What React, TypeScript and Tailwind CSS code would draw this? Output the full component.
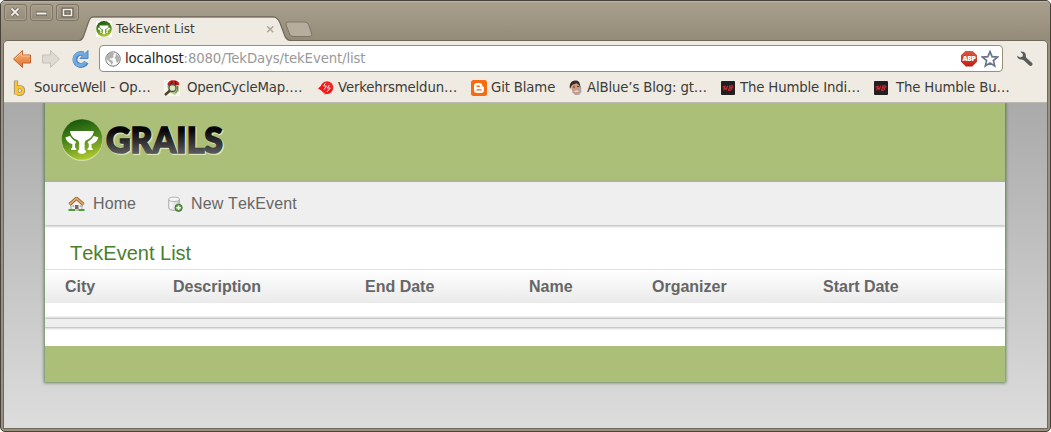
import React from 'react';

const WindowButton = ({ children }: { children: React.ReactNode }) => (
  <div className="flex h-[17px] w-[23px] items-center justify-center rounded-[3px] border border-[#7d7464] bg-gradient-to-b from-[#a79d8b] to-[#958c7b] shadow-[inset_0_0_0_1px_#ada493]">
    <svg width="15" height="13" viewBox="0 0 15 13" fill="none">{children}</svg>
  </div>
);

const GrailsMark = ({ size, id }: { size: number; id: string }) => (
  <svg width={size} height={size} viewBox="0 0 42 42" className="shrink-0">
    <defs>
      <linearGradient id={id} x1="0.35" y1="0" x2="0.6" y2="1">
        <stop offset="0" stopColor="#17560f" />
        <stop offset="0.5" stopColor="#508a1b" />
        <stop offset="1" stopColor="#b3cb31" />
      </linearGradient>
    </defs>
    <circle cx="21" cy="21.6" r="20.4" fill="#d5dfa9" />
    <circle cx="21" cy="20.5" r="20.3" fill={`url(#${id})`} />
    <path
      fill="#fff"
      d="M9.200 12h23.400v1.500c-.8 3.500-3.500 6.300-6.500 7.300-2 1-2.500 2-2.500 4v5.200c0 1 1.500 1.500 1.500 2.800 0 .7-.8 1-1.500 1.200l-.7.8h-4l-.7-.8c-.7-.2-1.500-.5-1.500-1.200 0-1.300 1.500-1.800 1.500-2.800v-5.200c0-2-.5-3-2.500-4-3-1-5.700-3.800-6.500-7.300z"
    />
    <path fill="#fff" d="M4.500 18.300l4.600-1.300c1.300 2.300 3 4 5.200 5.300l1.200 1c-1 .9-1.500 1.400-1.500 2.500v2.400c.2.900 1.300 1.100 1.300 2v.8H10v-.8c0-.9 1.200-1.100 1.300-2v-3.100C8 24.500 5 22 4.500 18.300zM37.300 18.300L32.700 17c-1.300 2.300-3 4-5.200 5.300l-1.200 1c1 .9 1.500 1.400 1.500 2.500v2.400c-.2.900-1.300 1.100-1.300 2v.8h5.300v-.8c0-.9-1.200-1.100-1.300-2v-3.100c3.300-.6 6.300-3.100 6.800-6.800z" />
  </svg>
);

const BackIcon = () => (
  <svg width="20" height="20" viewBox="0 0 20 20">
    <defs>
      <linearGradient id="back" x1="0" y1="0" x2="0" y2="1">
        <stop offset="0" stopColor="#f7b57a" />
        <stop offset="1" stopColor="#e4702b" />
      </linearGradient>
    </defs>
    <path d="M1.500 10L10.500 1.500V6H18.500V14H10.500V18.500z" fill="url(#back)" stroke="#c2602f" strokeLinejoin="round" />
    <path d="M3.200 9.700L9.500 3.800V7H17.500" fill="none" stroke="#fbd3ad" strokeWidth=".8" />
  </svg>
);

const ForwardIcon = () => (
  <svg width="20" height="20" viewBox="0 0 20 20">
    <path d="M18.500 10L9.500 1.500V6H1.500V14H9.500V18.500z" fill="#dedad1" stroke="#c5c0b7" strokeLinejoin="round" />
  </svg>
);

const ReloadIcon = () => (
  <svg width="20" height="20" viewBox="0 0 20 20">
    <path d="M16.300 13.300A6 6 0 1 1 13.500 5" fill="none" stroke="#4a82c0" strokeWidth="5" />
    <path d="M18 1.500V9.500H10L12.700 6.500 15 4.500z" fill="#6ea7e0" stroke="#4a82c0" strokeWidth=".9" strokeLinejoin="round" />
    <path d="M15.600 13A6 6 0 1 1 14.300 5.800" fill="none" stroke="#72a9e0" strokeWidth="3.300" />
  </svg>
);

const GlobeIcon = () => (
  <svg width="16" height="16" viewBox="0 0 16 16">
    <circle cx="8" cy="8" r="7.200" fill="#f8f8f8" stroke="#777" />
    <path fill="#b0b0b0" d="M2 5.500C3 3 5 1.700 7.500 1.600L9.500 3 8 4.500 8.700 6 6.500 7.500 5 7l-.5 1.500 2.700 1L8 11.500 6.500 14 5 11 2 8.500zM11 2.500l2.700 2.700.8 3-1.500 3.500-1.700-.5L11 8.500 9.700 7l1-2z" />
  </svg>
);

const StarIcon = () => (
  <svg width="18" height="18" viewBox="0 0 18 18">
    <path d="M9 1.700L11.100 6.700 16.500 7.100 12.400 10.600 13.700 15.900 9 13 4.300 15.900 5.600 10.600 1.500 7.100 6.900 6.700z" fill="#fff" stroke="#68758d" strokeWidth="1.700" />
  </svg>
);

const AdblockIcon = () => (
  <div className="flex h-[16px] w-[16px] items-center justify-center bg-gradient-to-b from-[#dc5546] to-[#c0150a] [clip-path:polygon(30%_0,70%_0,100%_30%,100%_70%,70%_100%,30%_100%,0_70%,0_30%)]">
    <span className="font-['Open_Sans',sans-serif] text-[7px] leading-[10px] font-extrabold tracking-[-0.4px] text-white">ABP</span>
  </div>
);

const WrenchIcon = () => (
  <svg width="18" height="18" viewBox="0 0 18 18">
    <path d="M1.300 5.800C1 7.800 2.500 9.200 4.500 9.400 6 9.500 7 9.500 8 10.500L13.300 15.600C15 17 17.500 14.900 16.200 13.100L10.500 8C9.500 7 10.200 5.800 9.600 4.100 9 2.200 6.800 1.100 4.600 1.700L7 4.300 6.500 6.600 4.100 7.400z" fill="#5b5b5b" />
  </svg>
);

const BIcon = () => (
  <svg width="14" height="17" viewBox="0 0 14 17">
    <g fill="none">
      <path d="M3 .5V14.500M3.500 10.500a3.300 3.500 0 1 1 6.600 0a3.300 3.500 0 1 1-6.600 0" stroke="#9c9382" strokeWidth="4.200" />
      <path d="M3 1V14.500M3.500 10.500a3.300 3.500 0 1 1 6.600 0a3.300 3.500 0 1 1-6.600 0" stroke="#fdc52b" strokeWidth="2.500" />
    </g>
  </svg>
);

const CycleIcon = () => (
  <svg width="16" height="16" viewBox="0 0 16 16">
    <rect width="16" height="16" fill="#f5f8ef" />
    <path d="M3 6l12-2v7l-4 4-6-3z" fill="#b9c999" />
    <path d="M3.500 5C3.500 2 6 .3 9 .3c4 0 6.500 1.700 6.300 4.500L12 5.300 4.500 6z" fill="#c51c20" />
    <path d="M8 1L7 5M11.500 1L12 5" stroke="#701318" strokeWidth="1.200" />
    <circle cx="8.500" cy="8" r="3.500" fill="#dce7bf" stroke="#4d5540" strokeWidth="1.300" />
    <path d="M6 10.500L1 15" stroke="#55402b" strokeWidth="2.500" />
    <path d="M13.500 6v4l-2 3" stroke="#717c42" fill="none" />
  </svg>
);

const TrafficIcon = () => (
  <svg width="16" height="16" viewBox="0 0 16 16">
    <circle cx="9" cy="7.500" r="6.300" fill="#ee2626" />
    <path d="M0 8.500L6 3 9 5 5 11.500zM6 14.500l8.500-7-2 5.500z" fill="#f01515" />
    <path d="M7.500 3L5.500 6h3L6 9.500M11.500 5L9.300 8h3L9 12" fill="none" stroke="#ffd0d0" strokeWidth="1" />
  </svg>
);

const BloggerIcon = () => (
  <svg width="16" height="16" viewBox="0 0 16 16">
    <rect width="16" height="16" rx="2.500" fill="#f96b10" />
    <path d="M6 3h2.500A3 3 0 0 1 11.300 6.300L13 7v3a3 3 0 0 1-3 3H6a3 3 0 0 1-3-3V6a3 3 0 0 1 3-3z" fill="#fff" />
    <path d="M6 6.200h2.300M6 9.900h4" stroke="#f96b10" strokeWidth="1.400" strokeLinecap="round" />
  </svg>
);

const FaceIcon = () => (
  <svg width="14" height="16" viewBox="0 0 14 16">
    <path d="M3 12l3-3 6-3 .5 6L10 15H6z" fill="#a8a8b4" />
    <ellipse cx="6.700" cy="8" rx="4.300" ry="6.500" transform="rotate(-12 6.700 8)" fill="#c99a82" />
    <path d="M1 9C0 4 2 .8 6 .5 10 .3 11.500 3 11.300 8L10 5 7.500 3.300 3 5z" fill="#3a2b27" />
    <path d="M4 7h2M8 6.500h2" stroke="#51352c" />
    <path d="M5.500 11.500l4-.7" stroke="#f4ddd0" strokeWidth="1.300" />
  </svg>
);

const HumbleIcon = () => (
  <svg width="14" height="14" viewBox="0 0 14 14">
    <rect width="14" height="14" rx="1" fill="#231f20" />
    <path d="M1.500 6L4 5.300 2.500 9.300M6.700 4.800L4.800 9.300M3 7.500L6.500 7M9.300 4.800L7.500 9.300M8 5.200C10 4.500 12.500 4.800 11.800 6 11.300 6.700 10 7 9 7 11 7 11.300 7.800 10.500 8.600 9.500 9.300 8 9.400 7 9.300" fill="none" stroke="#d42a34" strokeWidth="1.100" />
  </svg>
);

const HomeIcon = () => (
  <svg width="17" height="16" viewBox="0 0 17 16">
    <path d="M3 7.500L8.500 3l5.500 4.500V14H3z" fill="#f3f0eb" stroke="#999" strokeWidth=".8" />
    <path d="M7 9h3.500v5H7z" fill="#746a61" />
    <path d="M4.500 10h1.500M11.700 10h1.500" stroke="#8baac5" strokeWidth="1.500" />
    <path d="M1.500 8.500L8.500 2.300 15.500 8.500" fill="none" stroke="#8e5322" strokeWidth="3.200" strokeLinejoin="round" />
    <path d="M1.500 8.500L8.500 2.300 15.500 8.500" fill="none" stroke="#dba568" strokeWidth="1.900" />
    <path d="M.5 14h16" stroke="#4c9b3d" strokeWidth="2" />
    <path d="M7 14h3.500" stroke="#c9c4bd" strokeWidth="2" />
  </svg>
);

const DatabaseAddIcon = () => (
  <svg width="16" height="16" viewBox="0 0 16 16">
    <defs>
      <linearGradient id="drum">
        <stop offset="0" stopColor="#fff" />
        <stop offset="1" stopColor="#cfcfcf" />
      </linearGradient>
    </defs>
    <path d="M.8 3.500v8.500c0 3 10.500 3 10.500 0V3.500z" fill="url(#drum)" stroke="#9b9b9b" strokeWidth=".9" />
    <ellipse cx="6.050" cy="3.300" rx="5.250" ry="2.200" fill="#f5f5f5" stroke="#aaa" strokeWidth=".9" />
    <circle cx="10.600" cy="11.800" r="3.600" fill="#64a044" stroke="#397a27" />
    <path d="M10.600 9.600v4.400M8.400 11.800h4.400" stroke="#fff" strokeWidth="1.500" />
  </svg>
);

const TitleBar = () => (
  <div className="flex h-[40px] shrink-0 bg-gradient-to-b from-[#aaa08e] via-[#9f9583] to-[#938a77] pl-[3px] shadow-[inset_0_1px_0_#bdb4a4]">
    <div className="flex gap-[3px] pt-[3px]">
      <WindowButton>
        <path d="M3.500 2.500l7 7m0-7l-7 7" stroke="#666054" strokeWidth="3.200" />
        <path d="M3.500 2.500l7 7m0-7l-7 7" stroke="#f3efe8" strokeWidth="1.800" />
      </WindowButton>
      <WindowButton>
        <path d="M2 7.500h11" stroke="#666054" strokeWidth="4" />
        <path d="M2.500 7.500h10" stroke="#f3efe8" strokeWidth="2" />
      </WindowButton>
      <WindowButton>
        <path d="M3.500 3.500h8v6h-8z" stroke="#666054" strokeWidth="4" />
        <path d="M3.500 3.500h8v6h-8z" stroke="#f3efe8" strokeWidth="1.600" />
      </WindowButton>
    </div>
    <div className="relative mt-[15px] flex h-[25px] w-[212px] items-start pt-[5px] pl-[17px]">
      <svg className="absolute top-0 left-0" width="212" height="25" viewBox="0 0 212 25">
        <path d="M0 24.500C3 24.500 4 22 5 19L9.500 6C11 2 12 1.500 15 1.500H194C198 1.500 199.500 3 201 7L205.500 19C206.500 22 208 24.500 212 24.500V25H0z" fill="#efebe3" />
        <path d="M0 24.500C3 24.500 4 22 5 19L9.500 6C11 2 12 .8 15 .8H194C198 .8 199.500 3 201 7L205.500 19C206.500 22 208 24.500 212 24.500" fill="none" stroke="#6f6758" strokeWidth="1.200" />
      </svg>
      <div className="relative flex items-center">
        <div className="bg-white"><GrailsMark size={16} id="fav" /></div>
        <span className="ml-[4px] w-[150px] text-[12px] leading-[16px] text-[#3c3b37]">TekEvent List</span>
        <svg width="9" height="9" viewBox="0 0 9 9"><path d="M1.200 1.200l6 6m0-6l-6 6" stroke="#aaa59d" strokeWidth="1.400" /></svg>
      </div>
    </div>
    <svg className="mt-[20px] -ml-[6px]" width="28" height="17" viewBox="0 0 28 17">
      <path d="M3 1H19C22 1 23 2 24 5L26.500 12C27 14.500 26.500 15.500 24 15.500H9C6 15.500 5 14 4 11.500L1.500 5C.5 2 .8 1 3 1z" fill="#b7ad9e" stroke="#7d7464" />
    </svg>
  </div>
);

const Bookmark = ({ icon, label, className }: { icon: React.ReactNode; label: string; className: string }) => (
  <div className={`flex shrink-0 items-center ${className}`}>
    {icon}
    <span>{label}</span>
  </div>
);

const Toolbar = () => (
  <div className="h-[62px] shrink-0 rounded-t-[4px] border-b border-[#bbb8b2] bg-[#efebe3]">
    <div className="flex h-[34px] items-center pt-[1px] pl-[8px]">
      <BackIcon />
      <div className="ml-[9px]"><ForwardIcon /></div>
      <div className="ml-[9px]"><ReloadIcon /></div>
      <div className="ml-[9px] flex h-[27px] w-[904px] items-center rounded-[4px] border border-[#9a8e74] bg-white pr-[3px] pl-[5px]">
        <GlobeIcon />
        <span className="ml-[4px] flex-1 text-[13.300px] tracking-[-0.130px] text-[#999]"><span className="text-[#222]">localhost</span>:8080/TekDays/tekEvent/list</span>
        <AdblockIcon />
        <div className="ml-[4px]"><StarIcon /></div>
      </div>
      <div className="ml-[13px]"><WrenchIcon /></div>
    </div>
    <div className="flex h-[26px] items-center text-[13.300px] tracking-[-0.150px] text-[#3c3b37]">
      <Bookmark className="w-[156px] gap-[7px] pl-[9px]" icon={<BIcon />} label="SourceWell - Op…" />
      <Bookmark className="w-[154px] gap-[7px] pl-[4px]" icon={<CycleIcon />} label="OpenCycleMap.…" />
      <Bookmark className="w-[153px] gap-[4px] pl-[4px]" icon={<TrafficIcon />} label="Verkehrsmeldun…" />
      <Bookmark className="w-[98px] gap-[4px] pl-[4px]" icon={<BloggerIcon />} label="Git Blame" />
      <Bookmark className="w-[152px] gap-[4px] pl-[4px]" icon={<FaceIcon />} label="AlBlue’s Blog: gt…" />
      <Bookmark className="w-[153px] gap-[5px] pl-[4px]" icon={<HumbleIcon />} label="The Humble Indi…" />
      <Bookmark className="gap-[8px] pl-[4px]" icon={<HumbleIcon />} label="The Humble Bu…" />
    </div>
  </div>
);

const Logo = () => (
  <div className="flex items-start pt-[16px] pl-[16px]">
    <GrailsMark size={42} id="mark" />
    <svg className="-mt-[10px] -ml-[10px] overflow-visible" width="150" height="70" viewBox="-10 -10 150 70">
      <defs>
        <linearGradient id="word" x1="0" y1="8" x2="0" y2="36" gradientUnits="userSpaceOnUse">
          <stop offset="0.1" stopColor="#050505" />
          <stop offset="0.9" stopColor="#565656" />
        </linearGradient>
      </defs>
      <g className="font-['Lato',sans-serif] font-black" fontSize="36">
        <text x="4" y="35.300" textLength="117" lengthAdjust="spacingAndGlyphs" fill="#dbe5bb" stroke="#dbe5bb" strokeWidth="2.200">GRAILS</text>
        <text x="3" y="34.300" textLength="117" lengthAdjust="spacingAndGlyphs" fill="url(#word)" stroke="url(#word)" strokeWidth="1.700">GRAILS</text>
      </g>
    </svg>
  </div>
);

const columns = ['City', 'Description', 'End Date', 'Name', 'Organizer', 'Start Date'];

const Page = () => (
  <div className="flex-1 overflow-hidden bg-gradient-to-b from-[#aaaaaa] to-[#dddddd] font-['Liberation_Sans',sans-serif] text-[16px] text-[#666]">
    <div className="ml-[41px] flex h-[279px] w-[960px] flex-col bg-white shadow-[0_0_3px_1px_#255b17aa]">
      <header className="h-[79px] shrink-0 bg-[#abbf78]"><Logo /></header>
      <nav className="relative flex h-[43px] shrink-0 items-center bg-[#efefef] pl-[23px] shadow-[0_0_3px_1px_#aaaaaa] [clip-path:inset(-4px_0)] [font-kerning:none]">
        <HomeIcon /><span className="ml-[8px] w-[75px] tracking-[0.100px]">Home</span>
        <DatabaseAddIcon /><span className="ml-[7px] tracking-[0.150px]">New TekEvent</span>
      </nav>
      <h1 className="h-[44px] shrink-0 pt-[13px] pl-[25px] text-[20px] leading-[30px] text-[#48802c] [font-kerning:none]">TekEvent List</h1>
      <div className="grid h-[34px] shrink-0 grid-cols-[108px_192px_164px_123px_171px_1fr] items-center border-t border-[#dfdfdf] bg-gradient-to-b from-white to-[#eaeaea] pl-[20px] font-bold">
        {columns.map((name) => <span key={name}>{name}</span>)}
      </div>
      <div className="mt-[16px] h-[8px] shrink-0 bg-[#efefef] shadow-[0_0_3px_1px_#aaaaaa] [clip-path:inset(-4px_0)]" />
      <footer className="mt-auto h-[36px] shrink-0 bg-[#abbf78]" />
    </div>
  </div>
);

export default function App() {
  return (
    <div className="h-[432px] w-[1051px] overflow-hidden bg-white">
      <div className="flex h-full flex-col overflow-hidden rounded-[5px] border border-[#47433c] bg-[#9a907e] font-['DejaVu_Sans',sans-serif] whitespace-nowrap">
        <TitleBar />
        <div className="-mt-[1px] mr-[2px] mb-[2px] ml-[2px] flex min-h-0 flex-1 flex-col rounded-t-[5px] border border-[#70685a]">
          <Toolbar />
          <Page />
        </div>
      </div>
    </div>
  );
}
